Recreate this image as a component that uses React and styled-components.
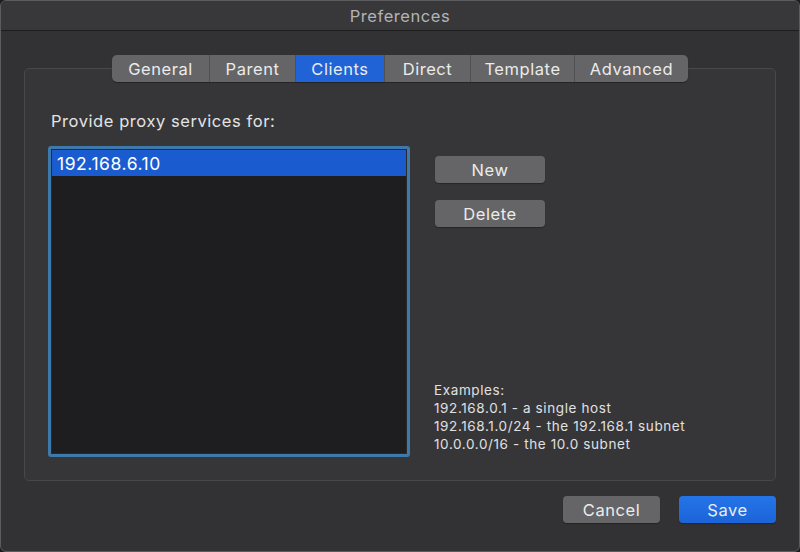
import React, { useState } from "react"
import styled, { createGlobalStyle } from "styled-components"

const GlobalStyle = createGlobalStyle`
html, body {
  margin: 0;
  padding: 0;
  background: #1c1c1e;
}
body {
  font-family: Inter, "Liberation Sans", sans-serif;
  letter-spacing: 0.035em;
  -webkit-font-smoothing: antialiased;
}
`

const Window = styled.div`
width: 800px;
height: 552px;
box-sizing: border-box;
border: 1px solid #5c5c5e;
border-radius: 6px;
background: #323234;
overflow: hidden;
display: flex;
flex-direction: column;
`

const TitleBar = styled.div`
height: 29px;
flex-shrink: 0;
background: #38383a;
border-bottom: 1px solid #1e1e20;
display: flex;
align-items: center;
justify-content: center;
color: #b3b3b5;
font-size: 16.5px;
`

const Body = styled.div`
flex: 1;
display: flex;
flex-direction: column;
padding: 24px 23px 0 23px;
`

const TabBar = styled.div`
align-self: center;
display: flex;
height: 27px;
margin-bottom: -14px;
position: relative;
z-index: 1;
border-radius: 5px;
overflow: hidden;
background: #656567;
box-shadow: 0 1px 1px rgba(0, 0, 0, 0.35);
`

const Tab = styled.div`
width: ${p => p.$w}px;
display: flex;
align-items: center;
justify-content: center;
color: #ebebeb;
font-size: 16.5px;
background: ${p => (p.$active ? "#1f63d6" : "transparent")};
border-left: ${p => (p.$first ? "none" : "1px solid #505052")};
box-sizing: border-box;
cursor: default;
`

const Group = styled.div`
height: 413px;
box-sizing: border-box;
border: 1px solid #48484a;
border-radius: 5px;
background: #363638;
padding: 42px 23px 23px 23px;
display: grid;
grid-template-columns: 362px 1fr;
column-gap: 25px;
grid-template-rows: 20px 1fr;
row-gap: 15px;
`

const Label = styled.div`
grid-column: 1 / 3;
padding-left: 3px;
color: #e3e3e5;
font-size: 16.5px;
line-height: 20px;
`

const List = styled.div`
box-sizing: border-box;
border: 3px solid #3e79ab;
border-radius: 3px;
background: #1e1e20;
padding: 1px;
box-shadow: inset 0 0 0 1px #2a2a2c;
`

const Row = styled.div`
height: 26px;
display: flex;
align-items: center;
padding-left: 5px;
font-size: 17.5px;
color: ${p => (p.$selected ? "#ffffff" : "#e0e0e0")};
background: ${p => (p.$selected ? "#1b5bd0" : "transparent")};
`

const Side = styled.div`
display: flex;
flex-direction: column;
align-items: flex-start;
padding-top: 10px;
`

const Button = styled.button`
width: ${p => p.$w || 110}px;
height: 27px;
border: none;
border-radius: 4px;
font-family: inherit;
letter-spacing: inherit;
font-size: 16.5px;
color: #ececec;
background: ${p => (p.$primary ? "linear-gradient(#2474e8, #1c64d8)" : "#656567")};
box-shadow: 0 1px 1px rgba(0, 0, 0, 0.3);
margin-bottom: ${p => p.$mb || 0}px;
padding: 0;
cursor: default;
`

const Examples = styled.div`
margin-top: auto;
margin-bottom: 4px;
margin-left: -1px;
color: #e0e0e2;
font-size: 13.5px;
letter-spacing: 0.045em;
line-height: 18px;
`

const Footer = styled.div`
display: flex;
justify-content: flex-end;
gap: 19px;
padding-top: 15px;
`

const tabs = [
  { name: "General", w: 97 },
  { name: "Parent", w: 86 },
  { name: "Clients", w: 89 },
  { name: "Direct", w: 86 },
  { name: "Template", w: 104 },
  { name: "Advanced", w: 114 },
]

const App = () => {
  const [active, setActive] = useState("Clients")
  return (
    <>
      <GlobalStyle />
      <Window>
        <TitleBar>Preferences</TitleBar>
        <Body>
          <TabBar>
            {tabs.map((t, i) => (
              <Tab
                key={t.name}
                $w={t.w}
                $first={i === 0}
                $active={t.name === active}
                onClick={() => setActive(t.name)}
              >
                {t.name}
              </Tab>
            ))}
          </TabBar>
          <Group>
            <Label>Provide proxy services for:</Label>
            <List>
              <Row $selected>192.168.6.10</Row>
            </List>
            <Side>
              <Button $mb={17}>New</Button>
              <Button>Delete</Button>
              <Examples>
                Examples:
                <br />
                192.168.0.1 - a single host
                <br />
                192.168.1.0/24 - the 192.168.1 subnet
                <br />
                10.0.0.0/16 - the 10.0 subnet
              </Examples>
            </Side>
          </Group>
          <Footer>
            <Button $w={97}>Cancel</Button>
            <Button $w={97} $primary>Save</Button>
          </Footer>
        </Body>
      </Window>
    </>
  )
}

export default App
